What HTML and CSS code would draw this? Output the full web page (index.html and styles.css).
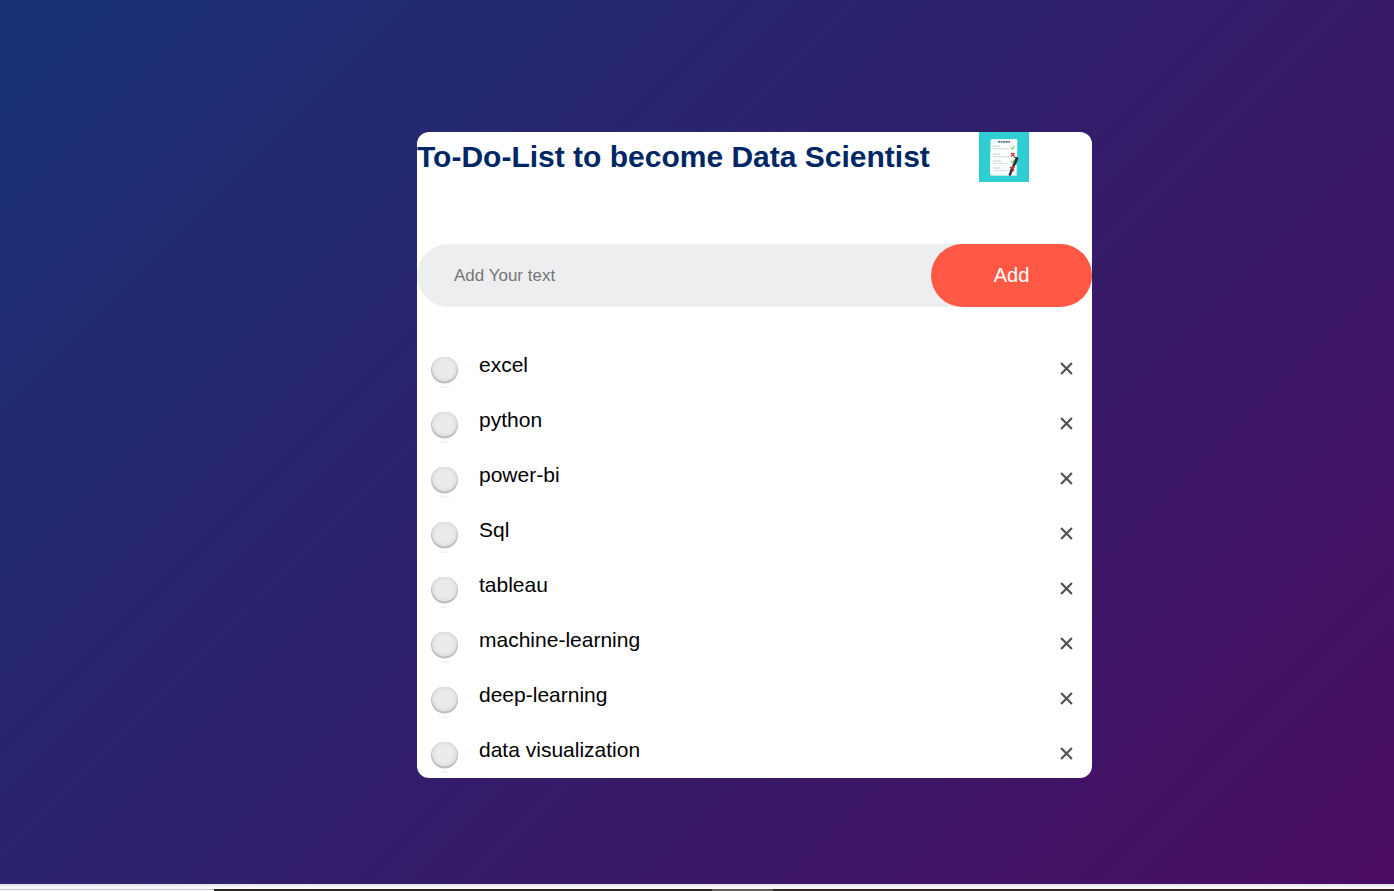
FILE: index.html
```html
<!DOCTYPE html>
<html lang="en">
<head>
<meta charset="utf-8">
<meta name="viewport" content="width=device-width, initial-scale=1">
<title>To-Do-List</title>
<link rel="stylesheet" href="styles.css">
</head>
<body>
<main class="container">
  <section class="todo-app">
    <header class="title">
      <h1>To-Do-List to become Data Scientist</h1>
      <svg class="logo" viewBox="0 0 50 50" aria-hidden="true">
        <rect width="50" height="50" fill="#2fced2"/>
        <path d="M12.500 9q0-1.500 1.500-1.500L37 7q1.500 0 1.500 1.500L38 42.500q0 1.500-1.500 1.500H13q-2 0-2-2z" fill="#bfe9e8"/>
        <path d="M11.500 8.500q0-1.200 1.200-1.200h24q1.300 0 1.300 1.300L37 41.500q0 1.600-1.500 1.600L12.500 42.500q-1.500 0-1.500-1.500z" fill="#fbfdfc"/>
        <path d="M19 9.800h12" stroke="#56788a" stroke-width="1.800" stroke-dasharray="2 .6"/>
        <path d="M14 14h7M14 22h7M14 29h8M14 36h7" stroke="#c3d2d2" stroke-width="1"/>
        <path d="M14 16.500h16M14 24.500h16M14 31.500h15M14 38.500h14" stroke="#d5e1e1" stroke-width="1.200"/>
        <path d="m32 15.500 1.400 1.500 2.200-3M32 29l1.400 1.500 2-3" fill="none" stroke="#7bcf72" stroke-width="1.100"/>
        <path d="m32 21 3.500 3.500m0-3.500L32 24.500M31 35l4 4m0-4-4 4" stroke="#d6333e" stroke-width="1.400"/>
        <path d="M38 25.500 30.500 43.500" stroke="#303139" stroke-width="2.400"/>
        <path d="m35 25 4 1-2.500 7" fill="none" stroke="#303139" stroke-width="1"/>
        <path d="m34.300 34.500-1 2.400" stroke="#d6333e" stroke-width="3"/>
      </svg>
    </header>
    <form class="row">
      <input class="text-box" type="text" placeholder="Add Your text" aria-label="Add Your text">
      <button class="add" type="button">Add</button>
    </form>
    <ul class="list">
      <li><label><input class="tick" type="checkbox"><span>excel</span></label><button class="remove" type="button" aria-label="Remove excel"><svg viewBox="0 0 12 12"><path d="m1 1 10 10M11 1 1 11"/></svg></button></li>
      <li><label><input class="tick" type="checkbox"><span>python</span></label><button class="remove" type="button" aria-label="Remove python"><svg viewBox="0 0 12 12"><path d="m1 1 10 10M11 1 1 11"/></svg></button></li>
      <li><label><input class="tick" type="checkbox"><span>power-bi</span></label><button class="remove" type="button" aria-label="Remove power-bi"><svg viewBox="0 0 12 12"><path d="m1 1 10 10M11 1 1 11"/></svg></button></li>
      <li><label><input class="tick" type="checkbox"><span>Sql</span></label><button class="remove" type="button" aria-label="Remove Sql"><svg viewBox="0 0 12 12"><path d="m1 1 10 10M11 1 1 11"/></svg></button></li>
      <li><label><input class="tick" type="checkbox"><span>tableau</span></label><button class="remove" type="button" aria-label="Remove tableau"><svg viewBox="0 0 12 12"><path d="m1 1 10 10M11 1 1 11"/></svg></button></li>
      <li><label><input class="tick" type="checkbox"><span>machine-learning</span></label><button class="remove" type="button" aria-label="Remove machine-learning"><svg viewBox="0 0 12 12"><path d="m1 1 10 10M11 1 1 11"/></svg></button></li>
      <li><label><input class="tick" type="checkbox"><span>deep-learning</span></label><button class="remove" type="button" aria-label="Remove deep-learning"><svg viewBox="0 0 12 12"><path d="m1 1 10 10M11 1 1 11"/></svg></button></li>
      <li><label><input class="tick" type="checkbox"><span>data visualization</span></label><button class="remove" type="button" aria-label="Remove data visualization"><svg viewBox="0 0 12 12"><path d="m1 1 10 10M11 1 1 11"/></svg></button></li>
    </ul>
  </section>
</main>
<footer class="taskbar"><div class="search"></div><div class="tasks"></div></footer>
</body>
</html>
```
FILE: styles.css
```css
* {
  box-sizing: border-box;
  margin: 0;
  padding: 0;
}

body {
  display: flex;
  flex-direction: column;
  min-height: 100vh;
  font-family: "Liberation Sans", Arial, sans-serif;
}

.container {
  flex: 1;
  display: grid;
  grid-template-columns: minmax(0, 58fr) minmax(0, 675px) minmax(0, 42fr);
  align-items: start;
  padding: 132px 0 40px;
  background: linear-gradient(135deg, #183276, #4a0c60);
}

.todo-app {
  grid-column: 2;
  background: #fff;
  border-radius: 12px;
}

.title {
  display: flex;
  align-items: center;
  gap: 49px;
  margin-bottom: 62px;
}

h1 {
  color: #002765;
  font-size: 30px;
  line-height: 36px;
}

.logo {
  flex: none;
  width: 50px;
  height: 50px;
}

.row {
  display: flex;
  height: 63px;
  margin-bottom: 31px;
  background: #edeef0;
  border-radius: 32px;
}

.text-box {
  flex: 1;
  min-width: 0;
  padding-left: 37px;
  border: 0;
  outline: 0;
  background: transparent;
  font: 17px "Liberation Sans", Arial, sans-serif;
}

.text-box::placeholder {
  color: #757575;
}

.add {
  width: 161px;
  border: 0;
  border-radius: 32px;
  background: #ff5945;
  color: #fff;
  font: 20px "Liberation Sans", Arial, sans-serif;
}

.list {
  list-style: none;
}

.list li {
  display: flex;
  align-items: center;
  justify-content: space-between;
  height: 55px;
  padding: 0 12px 0 14px;
}

.list label {
  display: flex;
  align-items: flex-start;
  align-self: flex-start;
  gap: 21px;
  color: #000;
  font-size: 21px;
  line-height: 24px;
}

.tick {
  appearance: none;
  width: 27px;
  height: 32px;
  margin-top: 19px;
  background:
    radial-gradient(ellipse 7px 1px at 50% 30px, #e4e4e4, #fff0),
    radial-gradient(circle 13px at 50% 12px, #ebebeb 0 8px, #e0e0e0 12px, #e0e0e000 13px),
    radial-gradient(circle 14px at 50% 13px, #b4b4b4 12px, #c4c4c4 13px, #fff0 14px);
}

.list li .tick:checked {
  background: radial-gradient(circle 14px at 50% 13px, #ff5945 13px, #fff0 14px);
}

.list span {
  margin-top: 15px;
}

.remove {
  display: grid;
  place-items: center;
  width: 27px;
  height: 27px;
  margin-top: 6px;
  border: 0;
  background: transparent;
}

.remove svg {
  width: 13px;
  height: 13px;
  stroke: #515151;
  stroke-width: 2;
}

.taskbar {
  display: flex;
  height: 7px;
  background: linear-gradient(#e8e6ee 0 2px, #fafafa 3px);
  align-items: flex-end;
}

.search {
  width: 214px;
  height: 2px;
  border-top: 1px solid #c5c8ce;
}

.tasks {
  flex: 1;
  height: 2px;
  background: linear-gradient(90deg, #2a2725 0 498px, #605a58 498px 559px, #302927 559px);
}
```
